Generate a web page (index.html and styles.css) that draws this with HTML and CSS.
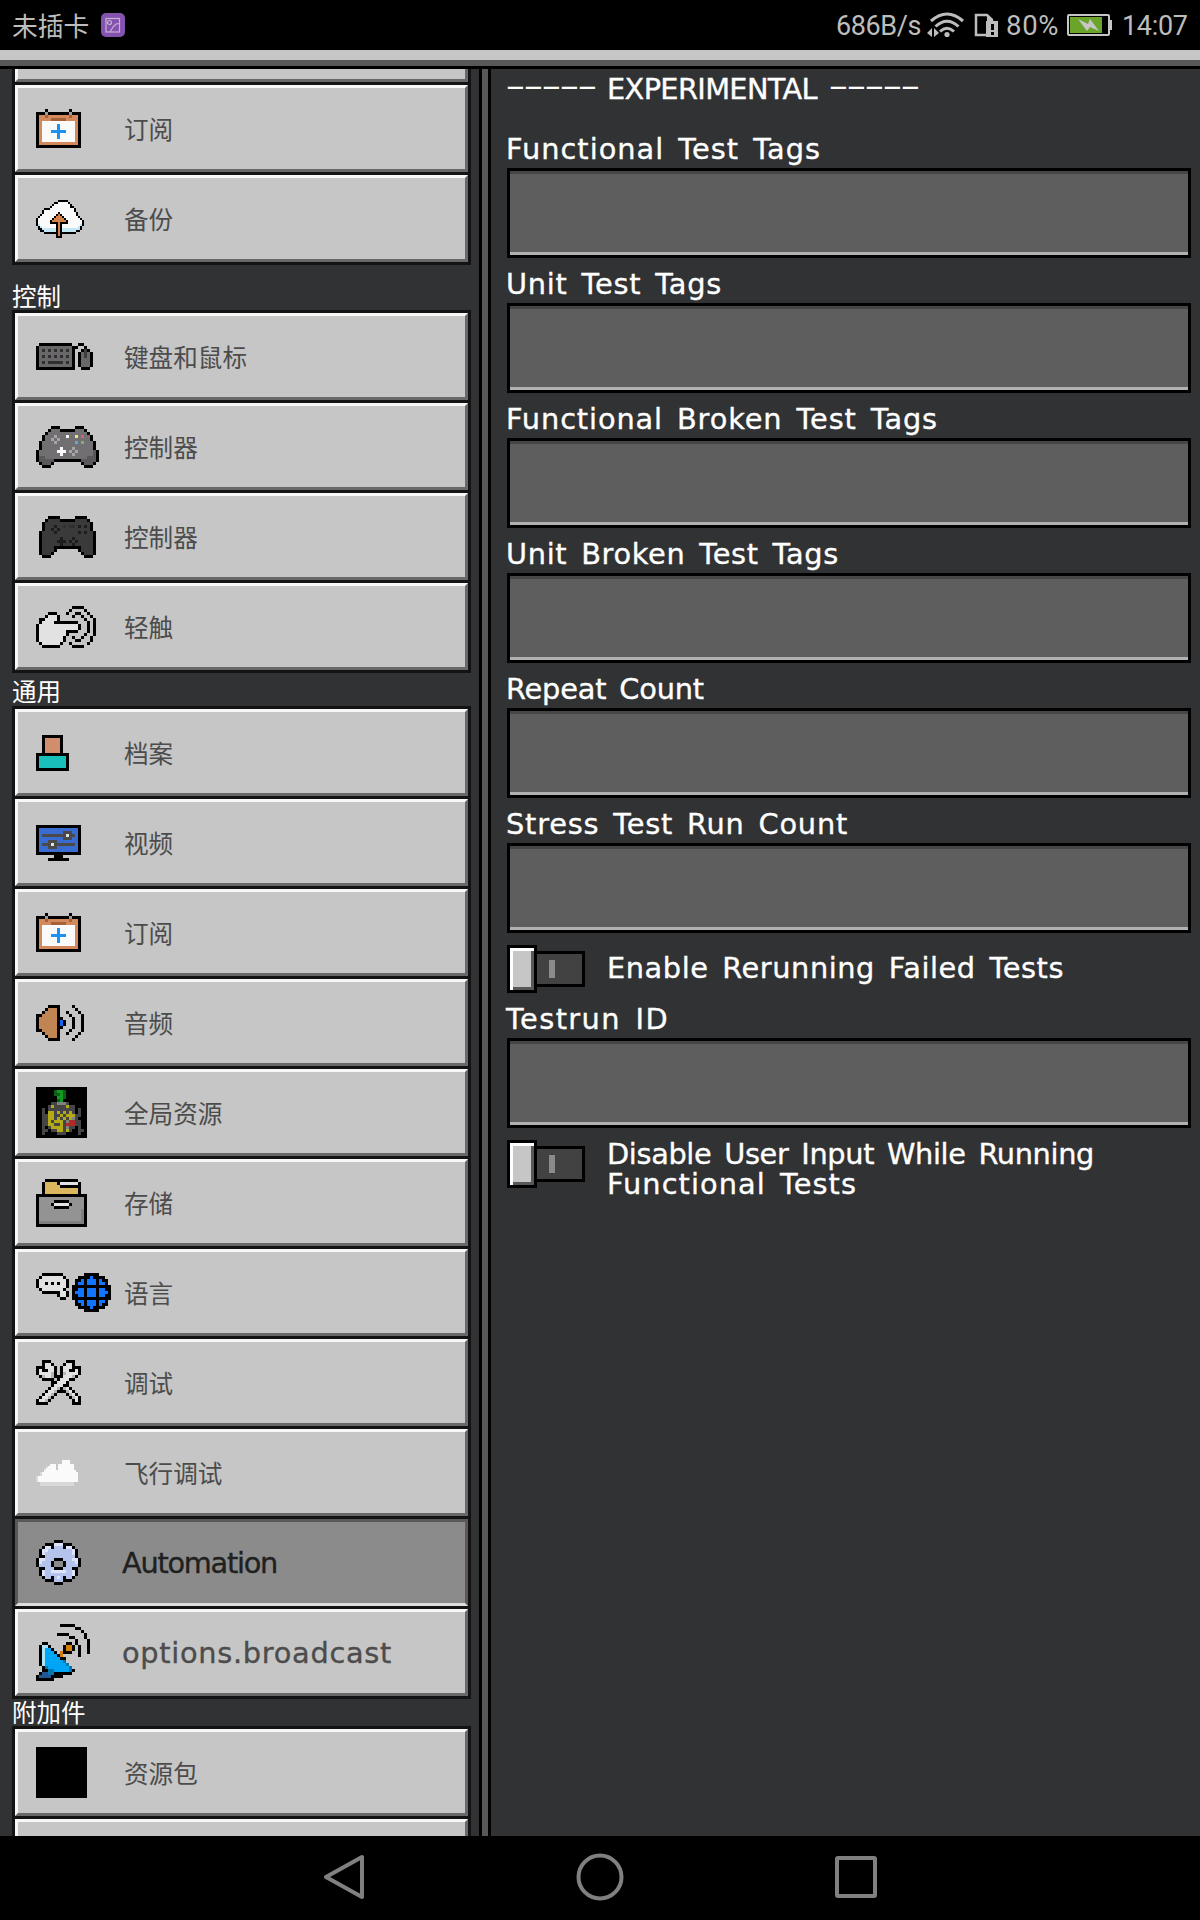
FILE: index.html
```html
<!DOCTYPE html>
<html lang="zh-CN">
<head>
<meta charset="utf-8">
<title>设置</title>
<link rel="stylesheet" href="styles.css">
</head>
<body>
<header class="status">
  <span class="carrier">未插卡</span>
  <svg class="badge" width="24" height="24" viewBox="0 0 24 24"><rect width="24" height="24" rx="5" fill="#8652b0"/><g fill="none" stroke="#c4b4d2" stroke-width="1.2"><rect x="5" y="5.500" width="13.500" height="13.500"/><circle cx="8.500" cy="9.500" r="2"/><path d="M9 19l3-5 3-3 3.500-.5"/></g></svg>
  <span class="speed">686B/s</span>
  <svg class="wifi" width="38" height="26" viewBox="0 0 38 26"><g fill="none" stroke="#bdbdbd" stroke-width="3"><path d="M4 9Q20-5 36 9"/><path d="M8.500 14.500Q20 4 31.500 14.500"/><path d="M13 19.500q7-6.500 14 0"/></g><circle cx="20" cy="22.500" r="2.600" fill="#bdbdbd"/><path d="M0 21l5-5v9zM7 16l5 5-5 4z" fill="#bdbdbd"/></svg>
  <svg class="sim" width="25" height="25" viewBox="0 0 25 25"><path d="M18 8V7l-5-5H2v20h11" fill="none" stroke="#bdbdbd" stroke-width="2.500"/><path d="M13 1l6 5v3h-6zM12 8h12v16H12z" fill="#bdbdbd"/><path d="M17 11h3v6h-3zm0 8h3v3h-3z" fill="#000"/></svg>
  <span class="pct">80%</span>
  <svg class="batt" width="46" height="22" viewBox="0 0 46 22"><rect x="1" y="1" width="41" height="20" rx="1" fill="#000" stroke="#c6c6c6" stroke-width="2"/><path d="M43 6h2v10h-2z" fill="#c6c6c6"/><path d="M3 3h32v16H3z" fill="#6aa52a"/><path d="M11 5l10 5 2-5 9 12-9-4-3 4z" fill="#c6c6c6"/></svg>
  <span class="clock">14:07</span>
</header>
<div class="topbar"></div>
<main class="panes">
  <nav class="side">
    <div class="group first">
      <a class="btn"></a>
      <a class="btn"><i data-icon="calendar"></i><em>订阅</em></a>
      <a class="btn"><i data-icon="backup"></i><em>备份</em></a>
    </div>
    <h2 class="h-control">控制</h2>
    <div class="group">
      <a class="btn"><i data-icon="keyboard"></i><em>键盘和鼠标</em></a>
      <a class="btn"><i data-icon="pad"></i><em>控制器</em></a>
      <a class="btn"><i data-icon="padDark"></i><em>控制器</em></a>
      <a class="btn"><i data-icon="touch"></i><em>轻触</em></a>
    </div>
    <h2 class="h-general">通用</h2>
    <div class="group">
      <a class="btn"><i data-icon="profile"></i><em>档案</em></a>
      <a class="btn"><i data-icon="video"></i><em>视频</em></a>
      <a class="btn"><i data-icon="calendar"></i><em>订阅</em></a>
      <a class="btn"><i data-icon="audio"></i><em>音频</em></a>
      <a class="btn"><i data-icon="pack"></i><em>全局资源</em></a>
      <a class="btn"><i data-icon="storage"></i><em>存储</em></a>
      <a class="btn"><i data-icon="language"></i><em>语言</em></a>
      <a class="btn"><i data-icon="debug"></i><em>调试</em></a>
      <a class="btn"><i data-icon="fly"></i><em>飞行调试</em></a>
      <a class="btn on"><i data-icon="gear"></i><span class="px" data-w="155">Automation</span></a>
      <a class="btn"><i data-icon="dish"></i><span class="px" data-w="270">options.broadcast</span></a>
    </div>
    <h2 class="h-addons">附加件</h2>
    <div class="group">
      <a class="btn"><i data-icon="black"></i><em>资源包</em></a>
      <a class="btn"></a>
    </div>
  </nav>
  <div class="divider"></div>
  <section class="content">
    <div class="label title"><span class="dash">-----</span><span class="px" data-w="210">EXPERIMENTAL</span><span class="dash end">-----</span></div>
    <div class="label"><span class="px" data-w="315">Functional Test Tags</span></div><div class="field"></div>
    <div class="label"><span class="px" data-w="216">Unit Test Tags</span></div><div class="field"></div>
    <div class="label"><span class="px" data-w="432">Functional Broken Test Tags</span></div><div class="field"></div>
    <div class="label"><span class="px" data-w="333">Unit Broken Test Tags</span></div><div class="field"></div>
    <div class="label"><span class="px" data-w="198">Repeat Count</span></div><div class="field"></div>
    <div class="label"><span class="px" data-w="342">Stress Test Run Count</span></div><div class="field"></div>
    <div class="option"><div class="toggle"><b></b><s></s></div><p><span class="px" data-w="457">Enable Rerunning Failed Tests</span></p></div>
    <div class="label short"><span class="px" data-w="163">Testrun ID</span></div><div class="field"></div>
    <div class="option"><div class="toggle"><b></b><s></s></div><p class="two"><span class="px" data-w="487">Disable User Input While Running</span><span class="px" data-w="250">Functional Tests</span></p></div>
  </section>
</main>
<footer class="navbar">
  <svg width="42" height="48" viewBox="0 0 42 48"><path d="M38 4v40L2 24z"/></svg>
  <svg width="48" height="48" viewBox="0 0 48 48"><circle cx="24" cy="24" r="21.500"/></svg>
  <svg width="44" height="48" viewBox="0 0 44 48"><rect x="3" y="5" width="38" height="38" rx="1"/></svg>
</footer>
<script src="icons.js"></script>
</body>
</html>
```
FILE: styles.css
```css
* { box-sizing: border-box; }
body { margin: 0; width: 1200px; height: 1920px; overflow: hidden; background: #000; display: flex; flex-direction: column; font-family: "Noto Sans CJK SC", sans-serif; }
.status { height: 50px; flex: none; display: flex; align-items: center; color: #bdbdbd; font-family: Roboto, "Noto Sans CJK SC", sans-serif; font-size: 27px; line-height: 50px; white-space: nowrap; }
.status span { padding-top: 2px; }
.status .carrier { margin-left: 12px; width: 89px; padding-top: 0; font-size: 25.8px; font-family: "Noto Sans CJK SC", sans-serif; }
.badge { flex: none; }
.speed { margin-left: 711px; width: 91px; letter-spacing: -.4px; }
.wifi { width: 38px; }
.sim { margin-left: 9px; width: 25px; }
.pct { margin-left: 7px; width: 61px; font-size: 27.5px; letter-spacing: .7px; }
.batt { width: 46px; }
.clock { margin-left: 9px; letter-spacing: -.3px; }
.topbar { height: 19px; flex: none; background: linear-gradient(#c6c6c6 10px, #585858 10px); border-bottom: 3px solid #000; }
.panes { height: 1767px; flex: none; display: flex; background: #313233; overflow: hidden; }
.side { width: 479px; padding-left: 12px; }
.divider { width: 12px; background: #585858; border: solid #000; border-width: 0 3px; }
.group { width: 459px; background: #131314; padding: 3px; display: grid; gap: 3px; }
.first { margin-top: -77px; }
.btn { height: 87px; display: flex; align-items: center; background: #c6c6c6; border: 3px solid; border-color: #f7f7f7 #68686a #68686a #f7f7f7; padding-left: 18px; color: #4c4c4c; font-size: 24.6px; line-height: 30px; white-space: nowrap; }
.btn.on { background: #8b8b8b; border-color: #5a5858 #5a5858 #dedede #5a5858; color: #202020; }
.btn i { width: 87px; flex: none; display: block; }
.btn em { font-style: normal; padding: 0 0 2px 1px; }
.btn .px { margin-left: -1px; }
.btn svg { display: block; }
.side h2 { margin: 0; color: #fff; font-size: 24.5px; font-weight: 400; line-height: 36px; height: 33px; }
.side .h-control { height: 45px; line-height: 62px; }
.side .h-addons { height: 27px; line-height: 26px; }
.px { font-family: "DejaVu Sans", sans-serif; font-size: 28.8px; line-height: 30px; word-spacing: 4px; white-space: nowrap; display: inline-block; -webkit-text-stroke: .35px currentColor; }
.content { flex: 1; padding: 0 9px 0 16px; color: #fff; }
.label { height: 45px; padding-top: 11px; line-height: 30px; margin-left: -1px; }
.title { height: 54px; padding-top: 5px; margin-left: -2px; display: flex; }
.dash { font-family: "DejaVu Sans", sans-serif; font-size: 28.8px; width: 102px; letter-spacing: -1.4px; transform: translateY(-3px) scaleX(2); transform-origin: 0 0; }
.dash.end { margin-left: 11px; }
.field { height: 90px; background: #5e5e5e; border: 3px solid #000; box-shadow: inset 0 3px #464646, inset 0 -3px #b1b1b1; }
.option { height: 60px; padding-top: 12px; display: flex; gap: 22px; }
.option p { margin: 0; padding-top: 8px; }
.option .two { display: flex; flex-direction: column; align-items: flex-start; padding-top: 0; margin-top: -1px; height: 60px; }
.short { padding-top: 11px; }
.toggle { width: 78px; height: 48px; display: flex; align-items: center; flex: none; }
.toggle b { width: 30px; height: 48px; background: #c6c6c6; border: 3px solid #000; box-shadow: inset 3px 3px #fff, inset -3px -3px #585858; }
.toggle s { flex: 1; height: 36px; border: 3px solid #000; border-left: 0; background: linear-gradient(#8b8b8b, #8b8b8b) 12px 6px / 6px 18px no-repeat #424242; }
.navbar { height: 84px; flex: none; display: flex; align-items: center; padding: 0 0 3px 324px; }
.navbar svg { fill: none; stroke: #808080; stroke-width: 4; stroke-linejoin: round; }
.navbar svg + svg { margin-left: 210px; }
```
FILE: icons.js
```js
const BASE = { K: '#000', W: '#fafafa', w: '#e2e2e2' };
const ICONS = {
  calendar: { c: { O: '#d4895c', G: '#9a9a9a', B: '#a5623a', b: '#1e90f0' }, g: `
...K.......K...
KKKGKKKKKKKGKKK
KOOBOOOOOOOBOOK
KOOOOBBBBBOOOOK
KOWWWWWWWWWWWOK
KOWWWWWbWWWWWOK
KOWWWWWbWWWWWOK
KOWWWbbbbbWWWOK
KOWWWWWbWWWWWOK
KOWWWWWbWWWWWOK
KOWWWWWWWWWWWOK
KOOOOOOOOOOOOOK
KKKKKKKKKKKKKKK` },
  backup: { u: 2, c: { O: '#d4814a', C: '#c4e6f5' }, g: `
...........KKKKK........
.........KKWWWWWK.......
........KWWWWWWWWK......
.......KWWWWWWWWWKK.....
....KKKWWWWWWWWWWWWK....
...KWWWWWWWWWWWWWWWK....
...KWWWWWWWKWWWWWWWWK...
..KWWWWWWWKOKWWWWWWWK...
.KWWWWWWWKOOOKWWWWWWWK..
KWWWWWWWKOOOOOKWWWWWWWK.
KWWWWWWKOOOOOOOKWWWWWWWK
KWWWWWWKKKKOKKKKWWWWWWWK
KCWWWWWWWWKOKWWWWWWWWWCK
.KCWWWWWWWKOKWWWWWWWWCK.
.KKCCCCCCCKOKCCCCCCCCCK.
..KKCCCCCCKOKCCCCCCCKK..
....KKKKKKKOKKKKKKKK....
..........KOK...........
..........KKK...........` },
  keyboard: { c: { g: '#696769', D: '#303030', d: '#3c3c3c' }, g: `
.KKKKKKKKKKK..KK...
KgggggggggggKK..K..
KgDgDgDgDgDgK..KdK.
KgggggggggggK.KgdgK
KgDgDgDgDgDgK.KgdgK
KgggggggggggK.KgggK
KgDgDDDDDgDgK.KgggK
KgggggggggggK.KgggK
KKKKKKKKKKKKK..KKK.` },
  pad: { c: { g: '#716f72', l: '#a5a5a8', y: '#efe486', r: '#dd5d72', b: '#5ba8dd', e: '#88ae72', d: '#5a585b' }, g: `
.....KKK.....KKK.....
....KgggKKKKKgggK....
...KgggggggggggggK...
..KggglgggWggygrggK..
..KgglglggggggggggK..
.KgggglggggggbgegggK.
.KgggggggggggggggggK.
.KggggggWggglggggggK.
KggggggWWWglglgggggdK
KgggggggWggglggggggdK
KddggggggggggggggdddK
KdddddKKKKKKKKKdddddK
.KdddK.........KdddK.
..KKK...........KKK..` },
  padDark: { c: { d: '#3a3a3a', h: '#1d1d1d', e: '#303030' }, g: `
....KKKK.....KKKK...
...KddddKKKKKddddK..
..KdddddddddddddddK.
..KdddhddedeedhdhdK.
..KddhdhddddddddddK.
.KddddhdddddddhdhddK
.KdddddddddddddddddK
.KddddddhdddhddddddK
.KdddddhhhdhdhdddddK
.KddddddhdddhddddddK
.KddddKKKKKKKKKddddK
.KddddK.......KddddK
.KdddK.........KdddK
..KKK...........KKK.` },
  touch: { g: `
............KKKK....
...........K....K...
....KKK...K..KK..K..
...KwwwK....K..K..K.
.KKwwwwK........K..K
.KwwwwKKKKKKKK...K.K
KwwwwwwwwwwwwwK..K.K
KwwwwwwwwwwwwwK..K.K
KwwwwwwwwwKKKK...K.K
KwwwwwwwwwK.....K..K
KwwwwwwwwK..K..K..K.
KwwwwwwwwK...KK...K.
.KwwwwwwK..K.....K..
..KKKKKK....KKKK....` },
  profile: { c: { O: '#d08e6c', T: '#18bfbb' }, g: `
..KKKKKKK..
..KOOOOOK..
..KOOOOOK..
..KOOOOOK..
..KOOOOOK..
..KOOOOOK..
KKKKKKKKKKK
KTTTTTTTTTK
KTTTTTTTTTK
KTTTTTTTTTK
KTTTTTTTTTK
KKKKKKKKKKK` },
  video: { c: { b: '#3a6bd0', g: '#4a4a4a' }, g: `
KKKKKKKKKKKKKKK
KbbbbbbbbbbbbbK
KbbbbbbbbgggbbK
KbggggggggwggbK
KbbbbbbbbgggbbK
KbbbgggbbbbbbbK
KbgggwgggggggbK
KbbbgggbbbbbbbK
KbbbbbbbbbbbbbK
KKKKKKKKKKKKKKK
......KKK......
....KKKKKKK....` },
  audio: { c: { O: '#c08552', b: '#1266f5' }, g: `
....KKKK....K...
...KOOOK.....K..
..KOOOOK..K...K.
KKOOOOOK...K...K
KOOOOOOKK...K..K
KOOOOOOKbK..K..K
KOOOOOOKbK..K..K
KOOOOOOKK...K..K
KKOOOOOK...K...K
..KOOOOK..K...K.
...KOOOK.....K..
....KKKK....K...` },
  pack: { c: { g: '#0d5f16', G: '#129a20', d: '#454547', y: '#b4aa14', r: '#b22a25', l: '#7f8381' }, g: `
KKKKKKKKKKKKKKKKK
KKKKKKgGGgKKKKKKK
KKKKKKggGgKKKKKKK
KKKKKKKGGgKKKKKKK
KKKKKKKgGKKKKKKKK
KKKKKddllldKKKKKK
KKKKdyddddyddKKKK
KKdKdddddddddKdKK
KKdKyydydydydKdKK
KKddyyddydyyyddKK
KKddyydydydyldKKK
KKddydyyydlrrddKK
KKddyyddydrrrddKK
KKdKdyyyydlddKdKK
KKddKddyydydKKddK
KKdKKKKdddKKKKdKK
KKKKKKKKKKKKKKKKK` },
  storage: { c: { f: '#dab75f', g: '#939393', d: '#7f7f7f' }, g: `
...KKKKKKKKKKK...
..KffffKwwwwwwK..
..KfffffKKKKKKK..
..KfffffffffffK..
..KfffffffffffK..
KKKKKKKKKKKKKKKKK
KgggggggggggggggK
KgggggKKKKKgggggK
KggggKwwwwwKggggK
KgggggKKKKKgggggK
KggggggggggggggdK
KggggggggggggggdK
KggggggggggggggdK
KggggggggggggggdK
KdddddddddddddddK
KKKKKKKKKKKKKKKKK` },
  language: { c: { B: '#1275ff' }, g: `
..KKKKKKK.......KKKKK....
.KwwwwwwwK....KKKKBKKKK..
KwwwwwwwwwK..KKBKBBBKBKK.
KwwKwKwKwwK..KBBKBBBKBBK.
KwwwwwwwwwK.KKKKKKKKKKKKK
.KwwwwwwwK..KKBBKBBBKBBKK
..KKKKKKwwK.KBBBKBBBKBBBK
.......KwwK.KKBBKBBBKBBKK
........KK..KKKKKKKKKKKKK
.............KBBKBBBKBBK.
.............KKBKBBBKBKK.
..............KKKKBKKKK..
................KKKKK....` },
  debug: { c: { g: '#b5b5b5' }, g: `
..KKK.....KKK..
..KwwK...KwwK..
KKKwwwK.KwwwKKK
KwKKwwK.KwwKKwK
KwwwwgK.KgwwwwK
.KgwwgKKKwwwgK.
..KKKKgKwwwKK..
.....KKwwwK....
.....KwwwKK....
....KwwgKgwK...
...KwwgKKKgwK..
..KwwgK...KgwK.
.KwwgK.....KgwK
KwwgK.......KwK
KKKK........KKK` },
  fly: { u: 2, c: { l: '#d8d8d8' }, g: `
.............WWWW....
.............WWWW....
.......WWW.WWWWWWWW..
.....lWWWW.WWWWWWWW..
....lWWWWW.WWWWWWWW..
....WWWWWWWWWWWWWWWW.
..lWWWWWWWWWWWWWWWWWW
..lWWWWWWWWWWWWWWWWWW
lWWWWWWWWWWWWWWWWWWWW
lWWWWWWWWWWWWWWWWWWWW
lWWWWWWWWWWWWWWWWWWWW
..lllllllllllllllll..
..lllllllllllllllll..` },
  gear: { c: { w: '#dce3fa', c: '#b4c3ec' }, g: `
......KKK......
...KKKwwwKKK...
..KwwKcccKwwK..
.KwwccccccccwK.
.KwcccccccccwK.
.KKccccccccccK.
KwwcccKKKcccwwK
KwcccK...KcccwK
KccccK...KccccK
.KKcccKKKcccKK.
.KwccwwwwwccwK.
.KwcccccccccwK.
..KccKcwcKccK..
...KKKcccKKK...
......KKK......` },
  dish: { c: { c: '#a8e4fa', b: '#00a6f5', k: '#0775ae', d: '#23558e', o: '#d57d0b' }, g: `
........KKKKK.....
.............KK...
...............K..
.......KKKK.....K.
...........KK...K.
.............K...K
..KK......KK.K...K
.KccK....KooK.K..K
.KcbbK...KooK.K..K
.KcbbbK.oKKK..K..K
.KcbbbbKo.....K...
.KcbbbbbKK........
.Kcbbbbbbk........
.Kcbbbbbbbk.......
..Kkbbbbbbbk......
..KKkkbbbbbkK.....
.KddkkKKKKKK......
KddddKKKK.........
KKKKKK............` },
  black: { g: Array(17).fill('K'.repeat(17)).join('\n') }
};

// Each run of equal cells becomes one rectangle.
for (const el of document.querySelectorAll('[data-icon]')) {
  const { g, u = 3, c = {} } = ICONS[el.dataset.icon];
  const rows = g.trim().split('\n');
  const colors = { ...BASE, ...c };
  const width = Math.max(...rows.map(r => r.length));
  let out = '';
  rows.forEach((row, y) => {
    for (const m of row.matchAll(/([^.])\1*/g)) {
      out += `<rect x="${m.index}" y="${y}" width="${m[0].length}" height="1" fill="${colors[m[1]]}"/>`;
    }
  });
  el.innerHTML = `<svg width="${width * u}" height="${rows.length * u}" viewBox="0 0 ${width} ${rows.length}" shape-rendering="crispEdges">${out}</svg>`;
}

// Tracks each label out to its set width.
for (const el of document.querySelectorAll('[data-w]')) {
  const natural = el.getBoundingClientRect().width;
  el.style.letterSpacing = ((el.dataset.w - natural) / el.textContent.length) + 'px';
}
```
